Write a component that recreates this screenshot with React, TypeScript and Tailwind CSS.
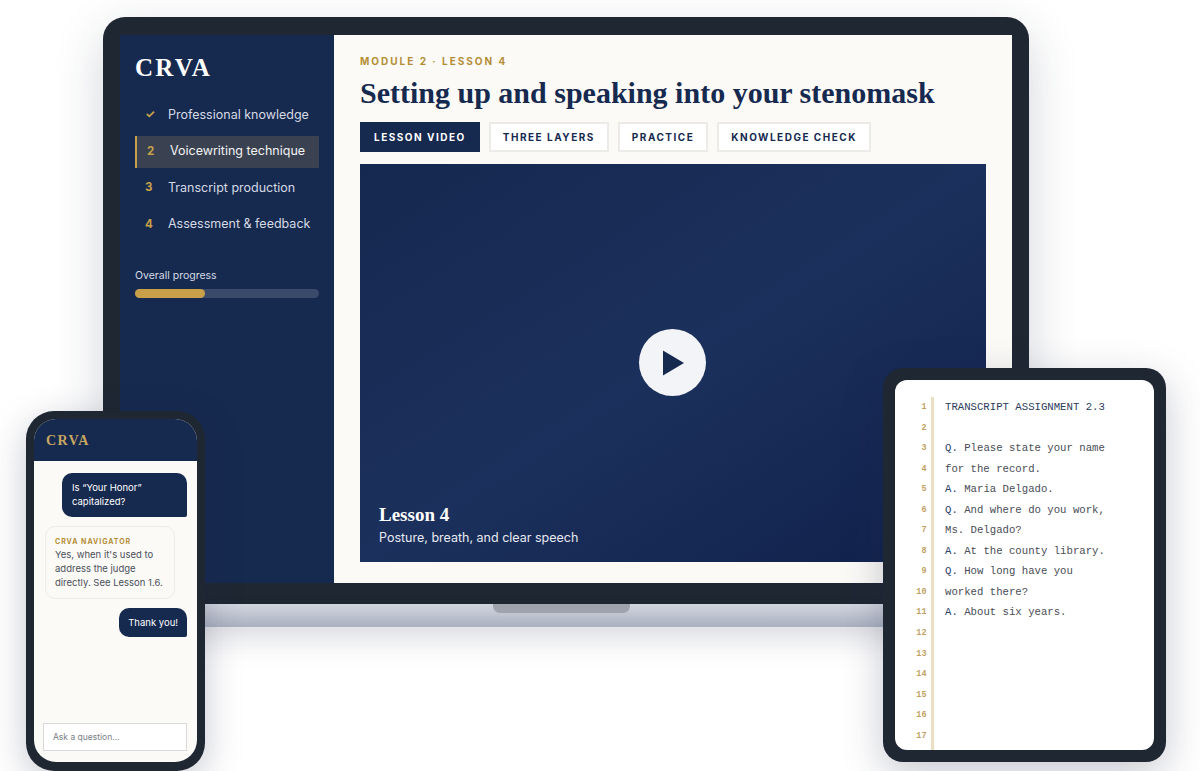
import React from "react";

const serif = "[font-family:'Liberation_Serif',serif]";
const sans = "[font-family:Inter,sans-serif]";

const modules = [
  { mark: "✓", label: "Professional knowledge" },
  { mark: "2", label: "Voicewriting technique", active: true },
  { mark: "3", label: "Transcript production" },
  { mark: "4", label: "Assessment & feedback" },
];

const tabs = ["LESSON VIDEO", "THREE LAYERS", "PRACTICE", "KNOWLEDGE CHECK"];

const transcript: [string, string][] = [
  ["", "TRANSCRIPT ASSIGNMENT 2.3"],
  ["", ""],
  ["Q.", " Please state your name"],
  ["", "for the record."],
  ["A.", " Maria Delgado."],
  ["Q.", " And where do you work,"],
  ["", "Ms. Delgado?"],
  ["A.", " At the county library."],
  ["Q.", " How long have you"],
  ["", "worked there?"],
  ["A.", " About six years."],
  ["", ""],
  ["", ""],
  ["", ""],
  ["", ""],
  ["", ""],
  ["", ""],
];

const Laptop: React.FC = () => (
  <div className="absolute left-[103px] top-[17px] w-[926px]">
    <div className="rounded-t-[22px] bg-[#1f2733] px-[17px] pt-[18px] pb-[21px] shadow-[0_16px_50px_rgba(30,40,70,0.2)]">
      <div className="flex h-[548px]">
        {/* Sidebar */}
        <aside className="w-[214px] bg-[#16294f] pl-[15px] pr-[15px]">
          <div className={`${serif} pt-[18px] text-[25px] leading-[29px] font-bold tracking-[0.09em] text-white`}>CRVA</div>
          <ul className="mt-[17px] flex flex-col gap-[4.5px]">
            {modules.map((m) => (
              <li
                key={m.label}
                className={`flex h-[32px] items-center text-[12.5px] ${
                  m.active
                    ? "border-l-[2.5px] border-[#c8a04a] bg-[#3a4150] pl-[10px] text-[#f2f3f5]"
                    : "pl-[10px] text-[#d5dae4]"
                }`}
              >
                <span className="w-[23px] text-[11.5px] font-bold text-[#c8a04a]">{m.mark}</span>
                <span className={m.active ? "pl-[0px]" : ""}>{m.label}</span>
              </li>
            ))}
          </ul>
          <div className="mt-[28px] text-[10.5px] leading-[14px] text-[#d5dae4]">Overall progress</div>
          <div className="mt-[6px] h-[9px] w-full rounded-full bg-[#3a4a6b]">
            <div className="h-full w-[70px] rounded-full bg-[#c8a04a]" />
          </div>
        </aside>

        {/* Lesson */}
        <main className="flex flex-1 flex-col bg-[#fbfaf7] px-[26px] pb-[21px] pt-[20px]">
          <div className="text-[10px] leading-[13px] font-bold tracking-[0.2em] text-[#b58d35]">MODULE 2 · LESSON 4</div>
          <h1 className={`${serif} mt-[6px] text-[30px] leading-[38px] font-bold text-[#16294f]`}>
            Setting up and speaking into your stenomask
          </h1>
          <div className="mt-[10px] flex gap-[9px]">
            {tabs.map((t, i) => (
              <div
                key={t}
                className={`flex h-[30px] items-center border-2 px-[12px] text-[10px] font-bold tracking-[0.15em] ${
                  i === 0 ? "border-[#16294f] bg-[#16294f] text-white" : "border-[#ecebe7] bg-white text-[#16294f]"
                }`}
              >
                {t}
              </div>
            ))}
          </div>
          <div className="relative mt-[12px] flex-1 bg-linear-to-br from-[#15284f] via-[#1b305c] to-[#10214a]">
            <div className="absolute left-[279px] top-[165px] flex h-[67px] w-[67px] items-center justify-center rounded-full bg-[#f3f4f7]">
              <svg width="24" height="26" viewBox="0 0 24 26" className="ml-[3px]">
                <path d="M1 0.5 L22 13 L1 25.5 Z" fill="#16294f" />
              </svg>
            </div>
            <div className="absolute bottom-[15px] left-[19px]">
              <div className={`${serif} text-[19px] leading-[24px] font-bold text-white`}>Lesson 4</div>
              <div className="mt-[2px] text-[12.5px] leading-[18px] text-[#e8eaf0]">Posture, breath, and clear speech</div>
            </div>
          </div>
        </main>
      </div>
    </div>
    {/* Base */}
    <div className="flex h-[23px] justify-center bg-linear-to-b from-[#d2d6e0] to-[#aab0bf] shadow-[0_12px_24px_rgba(30,40,70,0.08)]">
      <div className="ml-[-10px] h-[9px] w-[137px] rounded-b-[7px] bg-[#9fa3ad]" />
    </div>
  </div>
);

const Phone: React.FC = () => (
  <div className="absolute left-[26px] top-[411px] h-[360px] w-[179px] rounded-[28px] bg-[#1f2733] p-[8px] shadow-[0_10px_36px_rgba(30,40,70,0.25)]">
    <div className="flex h-[343px] flex-col overflow-hidden rounded-[22px] bg-[#fbfaf7]">
      <div className={`${serif} flex h-[42px] items-center bg-[#16294f] pl-[12px] text-[14px] font-bold tracking-[0.1em] text-[#c8a760]`}>CRVA</div>
      <div className="flex flex-1 flex-col px-[10px] pt-[12px]">
        <div className="ml-auto w-[125px] rounded-[10px] rounded-br-[2px] bg-[#16294f] px-[10px] py-[8px] text-[9.5px] leading-[14px] text-white">
          Is “Your Honor” capitalized?
        </div>
        <div className="mt-[9px] mr-[12px] ml-[1px] rounded-[10px] border border-[#ecebe5] bg-[#fbfaf7] px-[9px] pt-[9px] pb-[8px]">
          <div className="text-[7px] leading-[11px] font-bold tracking-[0.14em] text-[#b58d35]">CRVA NAVIGATOR</div>
          <div className="mt-[1px] text-[9.5px] leading-[14px] text-[#4a4f59]">Yes, when it's used to address the judge directly. See Lesson 1.6.</div>
        </div>
        <div className="mt-[9px] ml-auto rounded-[10px] rounded-br-[2px] bg-[#16294f] px-[9px] py-[8px] text-[9.5px] leading-[13px] text-white">Thank you!</div>
        <div className="mt-auto mb-[11px] ml-[-1px] flex h-[28px] items-center border border-[#d9d9d9] bg-white pl-[9px] text-[8.5px] text-[#7b7f87]">Ask a question...</div>
      </div>
    </div>
  </div>
);

const Tablet: React.FC = () => (
  <div className="absolute left-[883px] top-[368px] h-[394px] w-[283px] rounded-[20px] bg-[#1f2733] p-[12px] shadow-[0_12px_40px_rgba(30,40,70,0.25)]">
    <div className="flex h-[370px] overflow-hidden rounded-[12px] bg-white [font-family:'Liberation_Mono',monospace]">
      <div className="w-[31.5px] pt-[17px] text-right text-[8.5px] leading-[20.55px] font-bold text-[#bfa263]">
        {transcript.map((_, i) => (
          <div key={i}>{i + 1}</div>
        ))}
      </div>
      <div className="mt-[17px] ml-[4.5px] w-[3px] bg-[#eadfc3]" />
      <div className="pt-[17px] pl-[11px] text-[10.67px] leading-[20.55px] whitespace-pre text-[#4a4d55]">
        {transcript.map(([tag, text], i) => (
          <div key={i} className={i === 0 ? "h-[20.55px] text-[#2c3a5c]" : "h-[20.55px]"}>
            <span className="text-[#2c3f6b]">{tag}</span>
            {text}
          </div>
        ))}
      </div>
    </div>
  </div>
);

const App: React.FC = () => (
  <div className={`${sans} relative h-[771px] w-[1200px] overflow-hidden bg-white`}>
    <Laptop />
    <Phone />
    <Tablet />
  </div>
);

export default App;
